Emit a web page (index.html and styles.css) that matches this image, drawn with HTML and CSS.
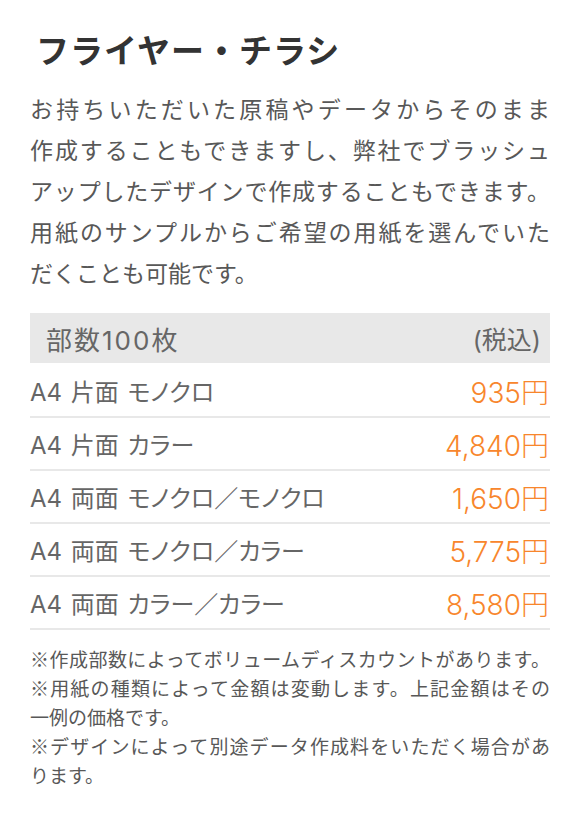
FILE: index.html
```html
<!DOCTYPE html>
<html lang="ja">
<head>
<meta charset="utf-8">
<title>フライヤー・チラシ</title>
<link rel="stylesheet" href="styles.css">
</head>
<body>
<main class="page">
  <h1 class="title">フライヤー・チラシ</h1>
  <p class="lead">
    <span class="ln">お持ちいただいた原稿やデータからそのまま</span>
    <span class="ln">作成することもできますし、弊社でブラッシュ</span>
    <span class="ln">アップしたデザインで作成することもできます。</span>
    <span class="ln">用紙のサンプルからご希望の用紙を選んでいた</span>
    <span class="ln last">だくことも可能です。</span>
  </p>
  <section class="price">
    <div class="price-head">
      <span class="head-left">部数100枚</span>
      <span class="head-right">(税込)</span>
    </div>
    <div class="row"><span class="label">A4 片面 モノクロ</span><span class="amount">935円</span></div>
    <div class="row"><span class="label">A4 片面 カラー</span><span class="amount">4,840円</span></div>
    <div class="row"><span class="label">A4 両面 モノクロ／モノクロ</span><span class="amount">1,650円</span></div>
    <div class="row"><span class="label">A4 両面 モノクロ／カラー</span><span class="amount">5,775円</span></div>
    <div class="row"><span class="label">A4 両面 カラー／カラー</span><span class="amount">8,580円</span></div>
  </section>
  <div class="notes">
    <span class="ln">※作成部数によってボリュームディスカウントがあります。</span>
    <span class="ln">※用紙の種類によって金額は変動します。上記金額はその</span>
    <span class="ln last">一例の価格です。</span>
    <span class="ln">※デザインによって別途データ作成料をいただく場合があ</span>
    <span class="ln last">ります。</span>
  </div>
</main>
</body>
</html>
```

FILE: styles.css
```css
html, body {
  margin: 0;
  padding: 0;
  background: #ffffff;
}

body {
  font-family: "Noto Sans CJK JP", "Noto Sans", sans-serif;
  color: #555555;
}

.page {
  width: 520px;
  padding: 0 30px;
}

.title {
  margin: 29px 0 0;
  padding-left: 6px;
  font-size: 33px;
  line-height: 40px;
  font-weight: 700;
  letter-spacing: 1px;
  color: #333333;
}

.lead {
  margin: 19px 0 0;
  font-size: 23px;
  line-height: 41px;
  color: #585858;
}

.ln {
  display: block;
  text-align: justify;
  text-align-last: justify;
}

.ln.last {
  text-align-last: left;
}

.price {
  margin-top: 20px;
  font-family: "Inter", "Noto Sans CJK JP", sans-serif;
}

.price-head {
  display: flex;
  justify-content: space-between;
  align-items: center;
  height: 50px;
  padding: 0 9px 0 16px;
  background: #e8e8e8;
  color: #666666;
  margin-bottom: 2px;
}

.head-left {
  font-size: 26px;
  letter-spacing: 2px;
}

.head-right {
  font-size: 25px;
}

.row {
  display: flex;
  justify-content: space-between;
  align-items: center;
  height: 51px;
  border-bottom: 2px solid #e8e8e8;
}

.label {
  font-size: 24px;
  color: #666666;
  font-feature-settings: "palt";
  word-spacing: 2px;
}

.amount {
  font-size: 28px;
  font-weight: 300;
  color: #f8862c;
  padding-right: 1px;
}

.notes {
  margin-top: 14px;
  font-size: 19px;
  line-height: 29px;
  color: #585858;
}
```
